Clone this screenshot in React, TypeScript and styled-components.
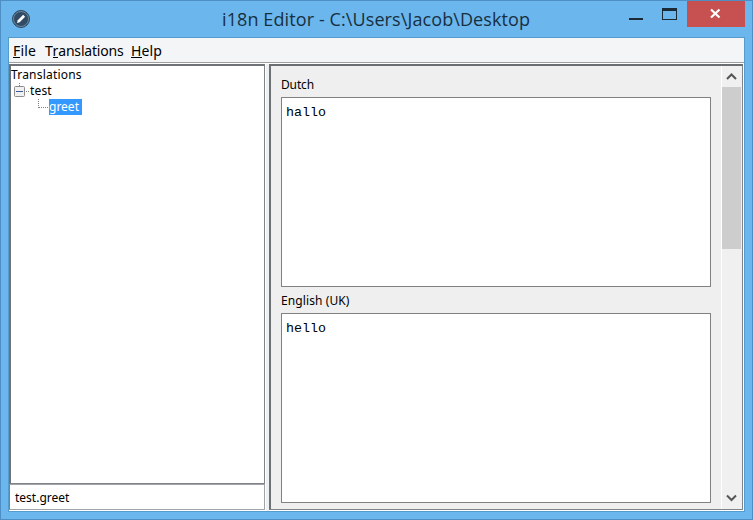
import React from "react";
import styled, { createGlobalStyle } from "styled-components";

const GlobalStyle = createGlobalStyle`
  * { box-sizing: border-box; }
  body { margin: 0; overflow: hidden; }
`;

const Window = styled.div`
  width: 753px;
  height: 520px;
  display: flex;
  flex-direction: column;
  padding: 0 7px 7px;
  background: #6bb6ed;
  border: 1px solid #4d8fc4;
  color: #000;
  font: 12px/16px "Noto Sans", sans-serif;
`;

const TitleBar = styled.header`
  height: 36px;
  flex: none;
  display: grid;
  grid-template-columns: 214px 1fr 131px;
`;

const AppIcon = styled.svg`
  margin: 8px 0 0 3px;
`;

const Title = styled.h1`
  margin: 4px 0 0;
  font: 400 18px/28px "Open Sans", sans-serif;
  letter-spacing: 0.1px;
  color: #17303f;
  white-space: nowrap;
`;

const Controls = styled.div`
  display: flex;
  align-items: flex-start;
  justify-content: flex-end;
`;

const WindowButton = styled.button<{ $width: number; $danger?: boolean }>`
  width: ${(p) => p.$width}px;
  height: 26px;
  padding: 0;
  border: 0;
  background: ${(p) => (p.$danger ? "#c75050" : "transparent")};
  svg { display: block; }
`;

const Client = styled.div`
  flex: 1;
  min-height: 0;
  display: flex;
  flex-direction: column;
  background: #fff;
  border: 1px solid #559ccd;
`;

const MenuBar = styled.nav`
  height: 25px;
  flex: none;
  display: flex;
  padding: 3px 0 0 4px;
  background: #f4f5f7;
  border-bottom: 1px solid #a0a0a0;
  font: 14px/19px "Noto Sans", sans-serif;
`;

const MenuItem = styled.span<{ $width: number; $spacing: number }>`
  width: ${(p) => p.$width}px;
  letter-spacing: ${(p) => p.$spacing}px;
  white-space: nowrap;
`;

const Mnemonic = styled.span`
  display: inline-block;
  height: 17px;
  border-bottom: 1px solid #000;
`;

const Body = styled.main`
  flex: 1;
  min-height: 0;
  margin-top: 1px;
  display: grid;
  grid-template-columns: 256px 474px;
  column-gap: 4px;
  background: linear-gradient(#f0f0f0, #f0f0f0) 257px 0 / 3px 100% no-repeat #fff;
`;

const Sidebar = styled.aside`
  height: 446px;
  display: flex;
  flex-direction: column;
`;

const Tree = styled.div`
  height: 420px;
  padding-top: 1px;
  border: 1px solid #808488;
  border-top: 2px solid #6f7377;
  border-left: 2px solid #6f7377;
  background: #fff;
`;

const TreeRow = styled.div`
  height: 16px;
  display: flex;
`;

const TreeLabel = styled.span<{ $selected?: boolean; $spacing?: number }>`
  height: 16px;
  line-height: 15px;
  letter-spacing: ${(p) => p.$spacing ?? 0}px;
  ${(p) => p.$selected && "width: 33px; color: #fff; background: #3399ff;"}
`;

const Branch = styled.svg`
  display: block;
  flex: none;
`;

const KeyField = styled.div`
  height: 26px;
  padding: 5px 0 0 5px;
  border: 1px solid #a0a4a8;
  border-left-color: #808080;
  background: #fff;
`;

const Editor = styled.section`
  height: 446px;
  display: grid;
  grid-template-columns: 1fr 21px;
  background: #efefef;
  border: 1px solid #808488;
  border-width: 2px 1px 1px 2px;
  border-top-color: #6b6e71;
  border-left-color: #6b7277;
`;

const Fields = styled.div`
  padding: 11px 10px 0;
`;

const Field = styled.label`
  display: block;
  height: 216px;
`;

const Caption = styled.span<{ $spacing: number }>`
  display: block;
  height: 20px;
  line-height: 16px;
  letter-spacing: ${(p) => p.$spacing}px;
`;

const TextArea = styled.div`
  width: 430px;
  height: 190px;
  padding: 7px 4px;
  border: 1px solid #808080;
  background: #fff;
  font: 13.33px/16px "Liberation Mono", monospace;
`;

const ScrollBar = styled.div`
  display: flex;
  flex-direction: column;
  border-left: 1px solid #fff;
  background: #f0f0f0;
`;

const Arrow = styled.svg`
  display: block;
  flex: none;
`;

const Track = styled.div`
  flex: 1;
`;

const Thumb = styled.div`
  width: 19px;
  height: 162px;
  background: #cdcdcd;
`;

const fields = [
  { name: "Dutch", value: "hallo", spacing: -0.15 },
  { name: "English (UK)", value: "hello", spacing: 0.1 },
];

export default function App() {
  return (
    <>
      <GlobalStyle />
      <Window>
        <TitleBar>
          <AppIcon width="20" height="20" viewBox="0 0 20 20">
            <circle cx="10" cy="10" r="8.5" fill="#304b63" stroke="#304b63" />
            <circle cx="10" cy="10" r="7.5" fill="none" stroke="#7797ae" strokeWidth=".8" />
            <path d="M6 14l.8-2.8 5.3-5.4 2 2-5.4 5.4z" fill="#fff" />
          </AppIcon>
          <Title>i18n Editor - C:\Users\Jacob\Desktop</Title>
          <Controls>
            <WindowButton $width={30} aria-label="Minimize">
              <svg width="30" height="26"><path d="M8 17h14v2H8z" fill="#1b2a34" /></svg>
            </WindowButton>
            <WindowButton $width={36} aria-label="Maximize">
              <svg width="36" height="26">
                <path d="M11 7h15v12H11zM12 10v8h13v-8z" fill="#1b2a34" fillRule="evenodd" />
              </svg>
            </WindowButton>
            <WindowButton $width={58} $danger aria-label="Close">
              <svg width="58" height="26">
                <path d="M24 8.5l8.5 8M32.5 8.5l-8.5 8" stroke="#fff" strokeWidth="2.2" />
              </svg>
            </WindowButton>
          </Controls>
        </TitleBar>
        <Client>
          <MenuBar>
            <MenuItem $width={32} $spacing={0.2}><Mnemonic>F</Mnemonic>ile</MenuItem>
            <MenuItem $width={86} $spacing={-0.18}>T<Mnemonic>r</Mnemonic>anslations</MenuItem>
            <MenuItem $width={40} $spacing={0.15}><Mnemonic>H</Mnemonic>elp</MenuItem>
          </MenuBar>
          <Body>
            <Sidebar>
              <Tree>
                <TreeRow><TreeLabel $spacing={0.2}>Translations</TreeLabel></TreeRow>
                <TreeRow>
                  <Branch width="19" height="16">
                    <path d="M8.5 0v3M15 8.5h4" stroke="#808080" strokeDasharray="1 1" />
                    <rect x="3.5" y="3.5" width="10" height="10" rx="1" fill="#f0f0f0" stroke="#8c8c8c" />
                    <path d="M5 8.5h7" stroke="#3b5a9a" />
                  </Branch>
                  <TreeLabel $spacing={0.15}>test</TreeLabel>
                </TreeRow>
                <TreeRow>
                  <Branch width="38" height="16">
                    <path d="M27.5 0v9M28 8.5h9" fill="none" stroke="#808080" strokeDasharray="1 1" />
                  </Branch>
                  <TreeLabel $selected>greet</TreeLabel>
                </TreeRow>
              </Tree>
              <KeyField>test.greet</KeyField>
            </Sidebar>
            <Editor>
              <Fields>
                {fields.map((f) => (
                  <Field key={f.name}>
                    <Caption $spacing={f.spacing}>{f.name}</Caption>
                    <TextArea>{f.value}</TextArea>
                  </Field>
                ))}
              </Fields>
              <ScrollBar>
                <Arrow width="20" height="21">
                  <path d="M5 13l4.5-4.5 4.5 4.5" fill="none" stroke="#555" strokeWidth="2" />
                </Arrow>
                <Track><Thumb /></Track>
                <Arrow width="20" height="21">
                  <path d="M5 7.5l4.5 4.5 4.5-4.5" fill="none" stroke="#555" strokeWidth="2" />
                </Arrow>
              </ScrollBar>
            </Editor>
          </Body>
        </Client>
      </Window>
    </>
  );
}
